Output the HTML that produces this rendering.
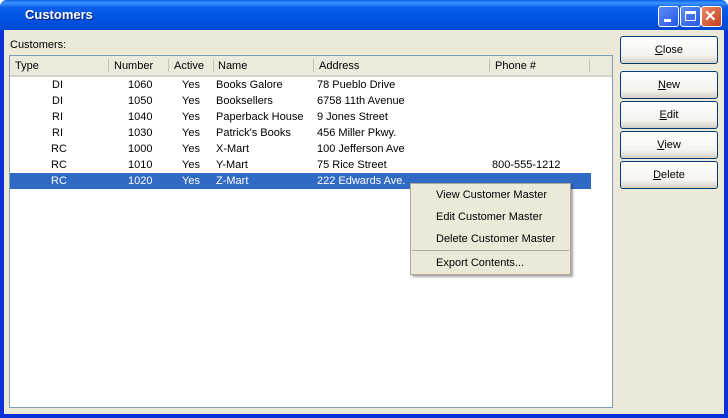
<!DOCTYPE html>
<html><head><style>
body{margin:0;width:728px;height:418px;overflow:hidden;font-family:Tahoma,"Liberation Sans",sans-serif;font-size:11px;}
.win{position:absolute;left:0;top:0;width:728px;height:418px;background:#0831D9;border-radius:7px 7px 0 0;}
.title{position:absolute;left:0;top:0;width:728px;height:30px;border-radius:7px 7px 0 0;background:linear-gradient(#0A5FEB 0%,#3D95FF 10%,#0D5EE8 25%,#0054E3 60%,#0148D0 100%);}
.title span{position:absolute;left:25px;top:7px;color:#fff;font-weight:bold;font-size:13px;text-shadow:1px 1px #0A1E6E;}
.client{position:absolute;left:4px;top:30px;width:720px;height:384px;background:#ECE9D8;}
.tb{position:absolute;top:6px;width:21px;height:21px;border:1px solid #fff;border-radius:3px;box-sizing:border-box;background:linear-gradient(135deg,#5B8BF5,#2659E6);}
.list{position:absolute;left:9px;top:55px;width:602px;height:351px;background:#fff;border:1px solid #7F9DB9;}
.hdr{position:absolute;left:0;top:0;width:602px;height:19px;background:#EBEADB;border-bottom:2px solid #D6D3C6;}
.h{position:absolute;top:4px;}
.sep{position:absolute;top:3px;width:1px;height:13px;background:#C7C5B2;}
.row{position:absolute;left:0;width:581px;height:16px;}
.row span{position:absolute;top:2px;white-space:nowrap;}
.sel{background:#316AC5;color:#fff;}
.btn{position:absolute;left:620px;width:98px;height:28px;box-sizing:border-box;border:1px solid #003C74;border-radius:3px;background:linear-gradient(#fff,#F4F3EE 70%,#D6D0C5);text-align:center;line-height:27px;}
.menu{position:absolute;left:410px;top:183px;width:159px;height:90px;background:#ECE9D8;border:1px solid #ACA899;box-shadow:2px 2px 2px rgba(0,0,0,.35);}
.menu div{position:absolute;left:25px;}
</style></head><body>
<div class="win">
<div class="title"><span>Customers</span>
<div class="tb" style="left:658px"><div style="position:absolute;left:5px;top:12px;width:7px;height:3px;background:#fff"></div></div>
<div class="tb" style="left:680px"><div style="position:absolute;left:4px;top:4px;width:11px;height:10px;border:1px solid #fff;border-top-width:3px;box-sizing:border-box"></div></div>
<div class="tb" style="left:701px;background:linear-gradient(135deg,#E8886A,#C8411D)"><div style="position:absolute;left:2px;top:2px;color:#fff;font:bold 15px 'Liberation Sans',sans-serif;line-height:15px">✕</div></div>
</div>
</div>
<div class="client"></div>
<div style="position:absolute;left:10px;top:39px">Customers:</div>
<div class="list">
<div class="hdr">
<span class="h" style="left:5px">Type</span><div class="sep" style="left:98px"></div>
<span class="h" style="left:104px">Number</span><div class="sep" style="left:158px"></div>
<span class="h" style="left:164px">Active</span><div class="sep" style="left:203px"></div>
<span class="h" style="left:208px">Name</span><div class="sep" style="left:303px"></div>
<span class="h" style="left:309px">Address</span><div class="sep" style="left:479px"></div>
<span class="h" style="left:485px">Phone #</span><div class="sep" style="left:579px"></div>
</div>
<div class="row" style="top:21px"><span style="left:42px">DI</span><span style="left:118px">1060</span><span style="left:172px">Yes</span><span style="left:206px">Books Galore</span><span style="left:307px">78 Pueblo Drive</span></div>
<div class="row" style="top:37px"><span style="left:42px">DI</span><span style="left:118px">1050</span><span style="left:172px">Yes</span><span style="left:206px">Booksellers</span><span style="left:307px">6758 11th Avenue</span></div>
<div class="row" style="top:53px"><span style="left:42px">RI</span><span style="left:118px">1040</span><span style="left:172px">Yes</span><span style="left:206px">Paperback House</span><span style="left:307px">9 Jones Street</span></div>
<div class="row" style="top:69px"><span style="left:42px">RI</span><span style="left:118px">1030</span><span style="left:172px">Yes</span><span style="left:206px">Patrick's Books</span><span style="left:307px">456 Miller Pkwy.</span></div>
<div class="row" style="top:85px"><span style="left:41px">RC</span><span style="left:118px">1000</span><span style="left:172px">Yes</span><span style="left:206px">X-Mart</span><span style="left:307px">100 Jefferson Ave</span></div>
<div class="row" style="top:101px"><span style="left:41px">RC</span><span style="left:118px">1010</span><span style="left:172px">Yes</span><span style="left:206px">Y-Mart</span><span style="left:307px">75 Rice Street</span><span style="left:482px">800-555-1212</span></div>
<div class="row sel" style="top:117px"><span style="left:41px">RC</span><span style="left:118px">1020</span><span style="left:172px">Yes</span><span style="left:206px">Z-Mart</span><span style="left:307px">222 Edwards Ave.</span></div>
</div>
<div class="btn" style="top:36px"><u>C</u>lose</div>
<div class="btn" style="top:71px"><u>N</u>ew</div>
<div class="btn" style="top:101px"><u>E</u>dit</div>
<div class="btn" style="top:131px"><u>V</u>iew</div>
<div class="btn" style="top:161px"><u>D</u>elete</div>
<div class="menu">
<div style="top:5px">View Customer Master</div>
<div style="top:27px">Edit Customer Master</div>
<div style="top:49px">Delete Customer Master</div>
<div style="left:1px;top:66px;width:157px;height:1px;background:#ACA899"></div>
<div style="top:73px">Export Contents...</div>
</div>
</body></html>
